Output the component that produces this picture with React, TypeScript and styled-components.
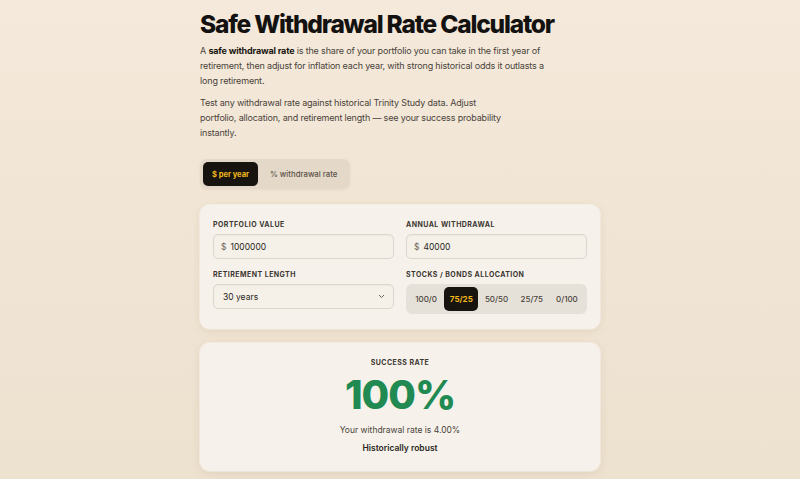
import { useState } from "react";
import styled, { createGlobalStyle } from "styled-components";

const GlobalStyle = createGlobalStyle`
  * { box-sizing: border-box; }
  html, body {
    margin: 0;
    padding: 0;
  }
  body {
    min-height: 100vh;
    background: linear-gradient(180deg, #f4e9da 0%, #ede1d0 100%);
    font-family: Inter, "Noto Sans", sans-serif;
    color: #1a1612;
  }
`;

const Page = styled.main`
  width: 400px;
  margin: 0 auto;
  padding-top: 10px;
  display: flex;
  flex-direction: column;
`;

const Title = styled.h1`
  margin: 0;
  font-size: 24.5px;
  line-height: 29px;
  font-weight: 800;
  letter-spacing: -1.2px;
  color: #141210;
  white-space: nowrap;
`;

const Lead = styled.p<{ $max: number; $top: number }>`
  margin: ${(p) => p.$top}px 0 0;
  max-width: ${(p) => p.$max}px;
  font-size: 9px;
  line-height: 15px;
  letter-spacing: -0.17px;
  color: #4a433a;

  b {
    color: #1a1612;
    font-weight: 700;
  }
`;

const ModeToggle = styled.div`
  margin-top: 19px;
  align-self: flex-start;
  display: flex;
  padding: 3px;
  gap: 2px;
  background: #e4d9c9;
  border-radius: 7px;
  box-shadow: 0 1px 3px rgba(120, 90, 50, 0.08);
`;

const ModeButton = styled.button<{ $active?: boolean }>`
  border: none;
  height: 24px;
  padding: 0 ${(p) => (p.$active ? 9 : 10)}px;
  border-radius: 5px;
  font-family: inherit;
  font-size: ${(p) => (p.$active ? 7.5 : 7.8)}px;
  font-weight: ${(p) => (p.$active ? 700 : 500)};
  background: ${(p) => (p.$active ? "#17130f" : "transparent")};
  color: ${(p) => (p.$active ? "#f1b81d" : "#5a5248")};
  cursor: pointer;
`;

const Card = styled.section`
  background: #f6f2eb;
  border-radius: 10px;
  box-shadow: 0 2px 10px rgba(140, 105, 60, 0.14), 0 0 0 1px rgba(255, 255, 255, 0.5);
`;

const InputsCard = styled(Card)`
  margin-top: 16px;
  padding: 15px 13px 15px;
  display: grid;
  grid-template-columns: 1fr 1fr;
  column-gap: 12px;
  row-gap: 11px;
`;

const Field = styled.div`
  display: flex;
  flex-direction: column;
  gap: 4px;
`;

const Label = styled.label`
  font-size: 7px;
  line-height: 10px;
  font-weight: 700;
  letter-spacing: 0.45px;
  text-transform: uppercase;
  color: #3b3631;
`;

const InputBox = styled.div`
  height: 25px;
  display: flex;
  align-items: center;
  gap: 4px;
  padding: 0 7px;
  background: #f5f1e9;
  border: 1px solid #dcd6cc;
  border-radius: 5px;
  box-shadow: inset 0 1px 1px rgba(0, 0, 0, 0.03);
  font-size: 8.5px;
  color: #2a2622;
`;

const Prefix = styled.span`
  color: #6a635a;
`;

const SelectBox = styled(InputBox)`
  justify-content: space-between;
  padding: 0 8px 0 9px;
`;

const Segments = styled.div`
  height: 30px;
  display: flex;
  padding: 3px;
  gap: 1px;
  background: #e6e1d8;
  border-radius: 6px;
`;

const Segment = styled.button<{ $active?: boolean }>`
  flex: 1;
  border: none;
  border-radius: 5px;
  font-family: inherit;
  font-size: 8px;
  font-weight: ${(p) => (p.$active ? 700 : 500)};
  background: ${(p) => (p.$active ? "#17130f" : "transparent")};
  color: ${(p) => (p.$active ? "#f1b81d" : "#4a443d")};
  cursor: pointer;
  padding: 0;
`;

const ResultCard = styled(Card)`
  margin-top: 14px;
  padding: 15px 0 16px;
  display: flex;
  flex-direction: column;
  align-items: center;
`;

const ResultLabel = styled.div`
  font-size: 7px;
  line-height: 10px;
  font-weight: 700;
  letter-spacing: 0.45px;
  color: #3b3631;
`;

const BigRate = styled.div`
  margin-top: 4px;
  font-size: 40px;
  line-height: 46px;
  font-weight: 800;
  letter-spacing: -1px;
  color: #218a52;
`;

const RateNote = styled.div`
  margin-top: 6px;
  font-size: 8.5px;
  line-height: 13px;
  color: #4a433a;
`;

const Verdict = styled.div`
  margin-top: 5px;
  font-size: 8.5px;
  line-height: 13px;
  font-weight: 600;
  color: #2a2622;
`;

const allocations = ["100/0", "75/25", "50/50", "25/75", "0/100"];

export default function App() {
  const [mode, setMode] = useState<"dollar" | "pct">("dollar");
  const [alloc, setAlloc] = useState("75/25");

  return (
    <>
      <GlobalStyle />
      <Page>
        <Title>Safe Withdrawal Rate Calculator</Title>
        <Lead $max={356} $top={4}>
          A <b>safe withdrawal rate</b> is the share of your portfolio you can
          take in the first year of retirement, then adjust for inflation each
          year, with strong historical odds it outlasts a long retirement.
        </Lead>
        <Lead $max={310} $top={7}>
          Test any withdrawal rate against historical Trinity Study data. Adjust
          portfolio, allocation, and retirement length — see your success
          probability instantly.
        </Lead>

        <ModeToggle>
          <ModeButton $active={mode === "dollar"} onClick={() => setMode("dollar")}>
            $ per year
          </ModeButton>
          <ModeButton $active={mode === "pct"} onClick={() => setMode("pct")}>
            % withdrawal rate
          </ModeButton>
        </ModeToggle>

        <InputsCard>
          <Field>
            <Label>Portfolio value</Label>
            <InputBox>
              <Prefix>$</Prefix>
              <span>1000000</span>
            </InputBox>
          </Field>
          <Field>
            <Label>Annual withdrawal</Label>
            <InputBox>
              <Prefix>$</Prefix>
              <span>40000</span>
            </InputBox>
          </Field>
          <Field>
            <Label>Retirement length</Label>
            <SelectBox>
              <span>30 years</span>
              <svg width="7" height="5" viewBox="0 0 7 5" fill="none">
                <path d="M1 1l2.5 2.5L6 1" stroke="#6a635a" strokeWidth="1" />
              </svg>
            </SelectBox>
          </Field>
          <Field>
            <Label>Stocks / Bonds allocation</Label>
            <Segments>
              {allocations.map((a) => (
                <Segment key={a} $active={alloc === a} onClick={() => setAlloc(a)}>
                  {a}
                </Segment>
              ))}
            </Segments>
          </Field>
        </InputsCard>

        <ResultCard>
          <ResultLabel>SUCCESS RATE</ResultLabel>
          <BigRate>100%</BigRate>
          <RateNote>Your withdrawal rate is 4.00%</RateNote>
          <Verdict>Historically robust</Verdict>
        </ResultCard>
      </Page>
    </>
  );
}
